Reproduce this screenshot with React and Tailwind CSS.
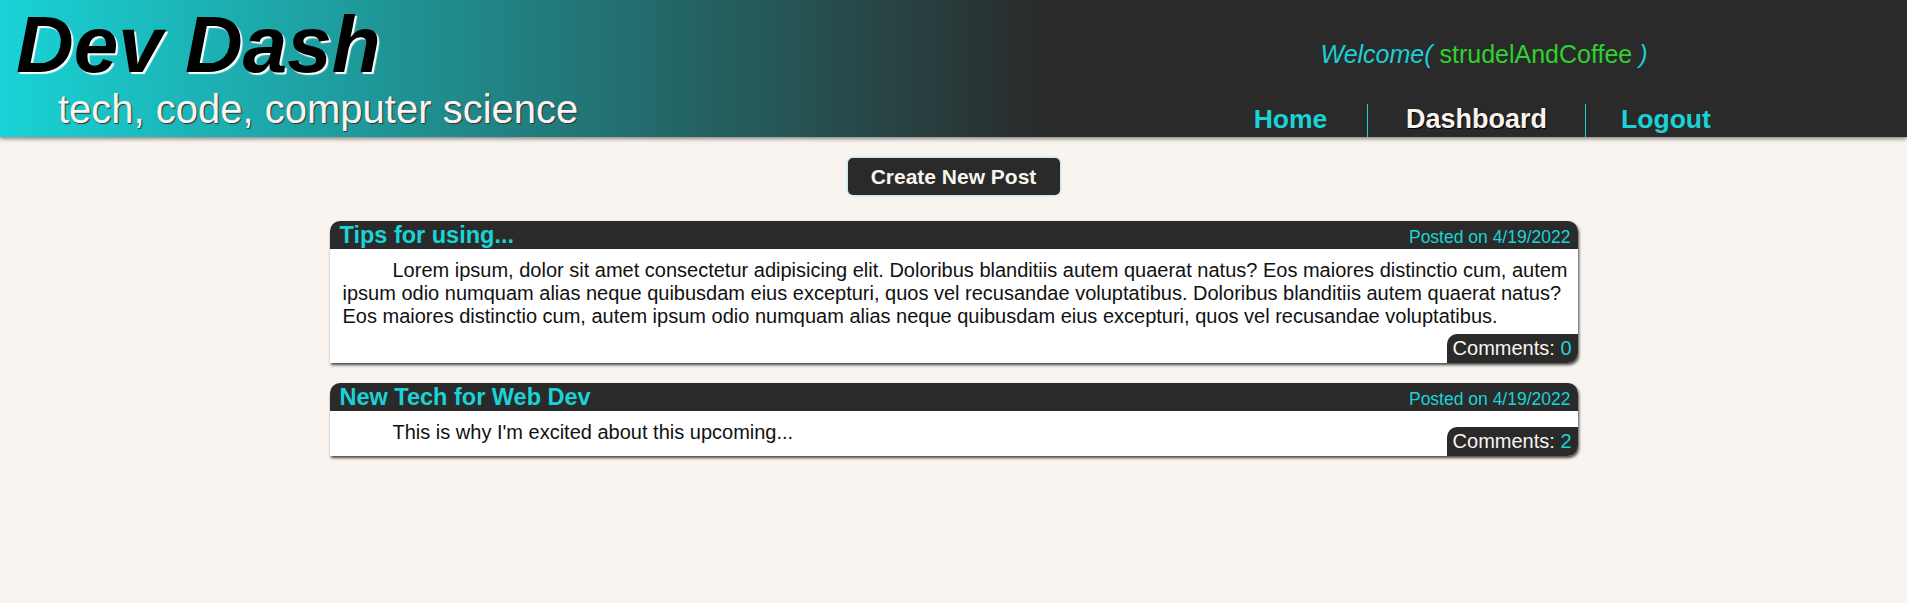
const posts = [
  {
    title: 'Tips for using...',
    date: '4/19/2022',
    body:
      'Lorem ipsum, dolor sit amet consectetur adipisicing elit. Doloribus blanditiis autem quaerat natus? Eos maiores distinctio cum, autem ipsum odio numquam alias neque quibusdam eius excepturi, quos vel recusandae voluptatibus. Doloribus blanditiis autem quaerat natus? Eos maiores distinctio cum, autem ipsum odio numquam alias neque quibusdam eius excepturi, quos vel recusandae voluptatibus.',
    comments: 0,
  },
  {
    title: 'New Tech for Web Dev',
    date: '4/19/2022',
    body: "This is why I'm excited about this upcoming...",
    comments: 2,
  },
]

function Header() {
  return (
    <header className="relative z-10 h-[137px] flex bg-[linear-gradient(to_right,#19d3d6_0%,#2a2a2a_55%)] shadow-[0_2px_4px_rgba(0,0,0,0.45)]">
      <div className="flex-1 pl-[16px]">
        <h1 className="pt-[5px] text-[80px] leading-[80px] font-bold italic text-black [text-shadow:2px_2px_1px_#fff]">
          Dev Dash
        </h1>
        <div className="pt-[1px] pl-[42px] text-[40px] leading-[46px] text-[#f9f4ef] [text-shadow:1px_1px_1px_#333]">
          tech, code, computer science
        </div>
      </div>
      <div className="w-[854px] flex flex-col items-center">
        <div className="mt-[40px] ml-[8px] text-[25px] leading-[28px] text-[#1ccfd4]">
          <span className="italic">Welcome(</span>{' '}
          <span className="text-[#2fd12f]">strudelAndCoffee</span>{' '}
          <span className="italic">)</span>
        </div>
        <nav className="mt-auto flex h-[33px] text-[26.5px] leading-[30px] font-bold">
          <a className="w-[154px] text-center border-r border-[#19d3d6] text-[#19d3d6]">Home</a>
          <a className="w-[218px] text-center border-r border-[#19d3d6] text-[27px] text-[#f9f4ef] [text-shadow:1px_1px_1px_#000]">Dashboard</a>
          <a className="w-[160px] text-center text-[#19d3d6]">Logout</a>
        </nav>
      </div>
    </header>
  )
}

function PostCard({ post }) {
  return (
    <article className="w-[1248px] bg-white rounded-t-[10px] rounded-br-[10px] shadow-[1px_2px_3px_#444]">
      <div className="h-[28px] pt-[1px] pl-[10px] pr-[7px] flex items-baseline justify-between bg-[#2a2a2a] rounded-t-[10px]">
        <h2 className="text-[23.5px] leading-[26px] font-bold text-[#19d3d6]">{post.title}</h2>
        <span className="text-[17.5px] text-[#19d3d6]">Posted on {post.date}</span>
      </div>
      <p className="flow-root pt-[10px] pl-[13px] pr-[6px] text-[20px] leading-[23px] text-[#111] indent-[50px]">
        {post.body}
        <span className="float-right mt-[6px] -mr-[6px] indent-0 px-[6px] py-[3px] bg-[#2a2a2a] text-[#f9f4ef] rounded-tl-[10px] rounded-br-[10px]">
          Comments: <span className="text-[#19d3d6]">{post.comments}</span>
        </span>
      </p>
    </article>
  )
}

export default function App() {
  return (
    <div className="min-h-[603px] bg-[#f9f4ef] font-['Liberation_Sans',Arial,sans-serif]">
      <Header />
      <main className="flex flex-col items-center">
        <button className="mt-[21px] w-[212px] h-[37px] rounded-[5px] bg-[#2a2a2a] text-[21px] font-bold text-[#f9f4ef] shadow-[0_0_3px_#6fd6f5]">
          Create New Post
        </button>
        <div className="mt-[26px] flex flex-col gap-[20px]">
          {posts.map((p) => (
            <PostCard key={p.title} post={p} />
          ))}
        </div>
      </main>
    </div>
  )
}
